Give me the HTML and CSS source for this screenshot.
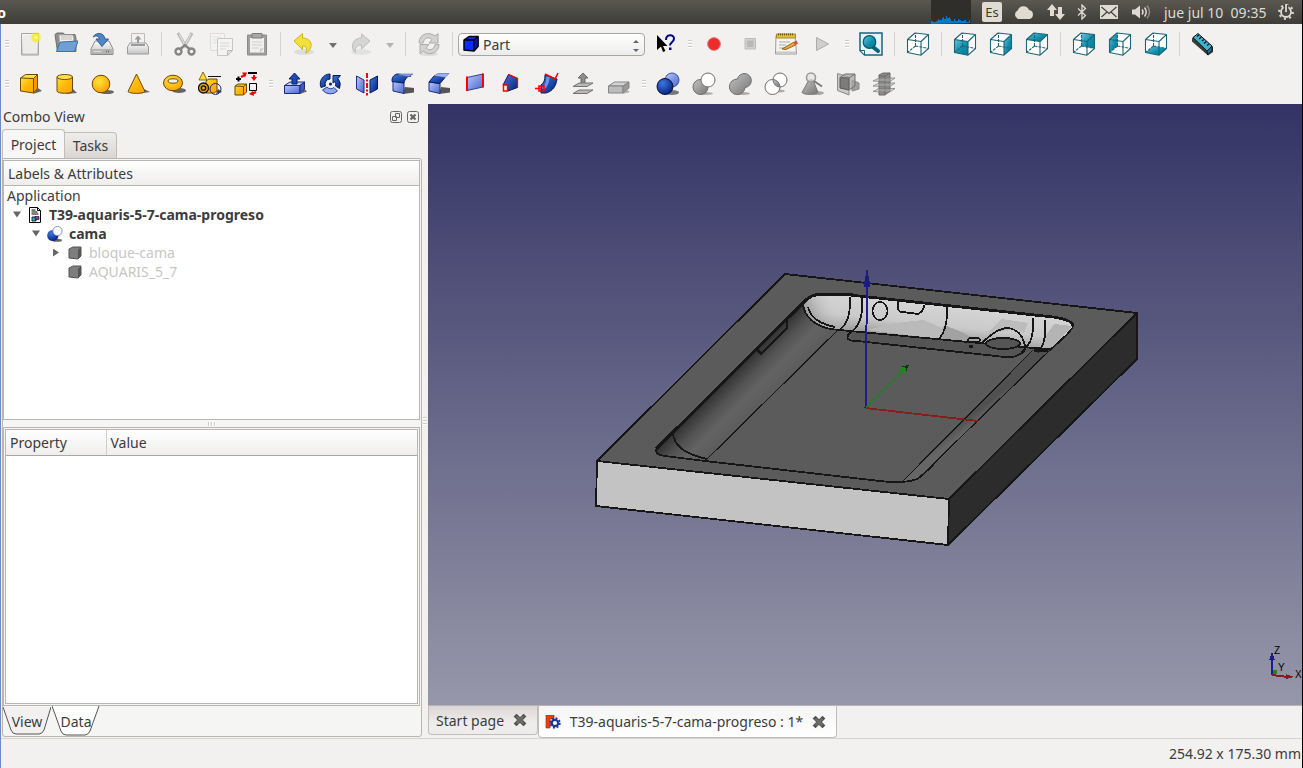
FILE: index.html
```html
<!DOCTYPE html>
<html lang="en">
<head>
    <meta charset="utf-8">
    <title>FreeCAD</title>
    <link rel="stylesheet" href="styles.css">
</head>
<body>
    <!-- Icon library -->
    <svg class="library" aria-hidden="true">
        <defs>
            <linearGradient id="gold" x1="0" y1="0" x2="1" y2="1"><stop offset="0" stop-color="#ffe23a"/><stop offset="0.5" stop-color="#ffb80a"/><stop offset="1" stop-color="#ffa200"/></linearGradient>
            <linearGradient id="blue" x1="0" y1="0" x2="1" y2="1"><stop offset="0" stop-color="#3f7be0"/><stop offset="1" stop-color="#04207a"/></linearGradient>
            <linearGradient id="pale" x1="0" y1="0" x2="1" y2="1"><stop offset="0" stop-color="#b9c9fa"/><stop offset="1" stop-color="#4a66cf"/></linearGradient>
            <linearGradient id="grey" x1="0" y1="0" x2="1" y2="1"><stop offset="0" stop-color="#c4c4c4"/><stop offset="1" stop-color="#747474"/></linearGradient>
            <linearGradient id="light" x1="0" y1="0" x2="0" y2="1"><stop offset="0" stop-color="#fafafa"/><stop offset="1" stop-color="#c4c4c4"/></linearGradient>
            <linearGradient id="teal" x1="0" y1="0" x2="1" y2="1"><stop offset="0" stop-color="#6cc0e0"/><stop offset="0.6" stop-color="#0a8ca8"/><stop offset="1" stop-color="#077d98"/></linearGradient>
            <radialGradient id="sun" cx="0.4" cy="0.35" r="0.7"><stop offset="0" stop-color="#ffe53a"/><stop offset="1" stop-color="#ff9c00"/></radialGradient>
            <radialGradient id="glow"><stop offset="0" stop-color="#fffba0"/><stop offset="0.5" stop-color="#f5ea2a"/><stop offset="1" stop-color="#f5ea2a" stop-opacity="0"/></radialGradient>
            <radialGradient id="ball" cx="0.35" cy="0.3" r="0.8"><stop offset="0" stop-color="#3b78e0"/><stop offset="1" stop-color="#021a78"/></radialGradient>
        </defs>

        <symbol id="i-new" viewBox="0 0 24 24"><path d="M3.500 1.500h17v21.500h-17z" fill="url(#light)" stroke="#a5a5a0"/><path d="M5 3h14v18.500H5z" fill="#ececea"/><circle cx="18" cy="5.500" r="6" fill="url(#glow)"/></symbol>
        <symbol id="i-open" viewBox="0 0 24 24"><path d="M1 2.500l2-1.500h6l2 1.500h10l1 4v13H3.500z" fill="#8f8f8c" stroke="#6f6f6c"/><path d="M5 3h14l1 8H6z" fill="#f2f2f2" stroke="#b0b0b0"/><path d="M7 5h11M7 7h11" stroke="#bbb"/><path d="M7 10l17-1-3.500 10.500H2.500L5.500 11z" fill="#6f9fd4" stroke="#3f6ea8"/></symbol>
        <symbol id="i-save" viewBox="0 0 24 24"><path d="M5 9h14l4 8v5.500H1V17z" fill="url(#light)" stroke="#8a8a88"/><path d="M1.500 17h21v5h-21z" fill="#b4b5b2"/><path d="M3.500 19.500h8" stroke="#ddd"/><path d="M16 19.500h4" stroke="#777" stroke-width="2" stroke-dasharray="1 1"/><path d="M3 5C6 0 14 0 15 7h3.500L12 14.500 6 7h3.500C9 4 6 3 3 5z" fill="#4f86c6" stroke="#2e5f9e"/></symbol>
        <symbol id="i-print" viewBox="0 0 24 24"><path d="M5.500 1.500h13V13h-13z" fill="#f2f2f2" stroke="#bcbcbc"/><path d="M12 3.500l3.500 4H13V12h-2V7.500H8.500z" fill="#999"/><path d="M4 11h16l2.500 4v7h-21v-7z" fill="url(#light)" stroke="#9a9a9a"/><path d="M5 13h14" stroke="#9a9a9a" stroke-width="2"/></symbol>
        <symbol id="i-cut" viewBox="0 0 24 24"><path d="M5 1l8 14M19 1l-8 14" stroke="#b3b3b3" stroke-width="3"/><path d="M6 2l7 13M18 2l-7 13" stroke="#e2e2e2" stroke-width="1.200"/><circle cx="5.500" cy="19.500" r="3" fill="none" stroke="#858585" stroke-width="2.400"/><circle cx="18.500" cy="19.500" r="3" fill="none" stroke="#858585" stroke-width="2.400"/><path d="M7.500 17l4.500-4 4.500 4" fill="none" stroke="#858585" stroke-width="2.400"/></symbol>
        <symbol id="i-copy" viewBox="0 0 24 24"><g opacity=".75"><path d="M1.500 1.500h14v17h-14z" fill="#f4f4f3" stroke="#d6d6d4"/><path d="M4 5h8M4 8h8M4 11h8" stroke="#dcdcda"/><path d="M8.500 6.500h15v12l-5 5h-10z" fill="#f4f4f3" stroke="#b8b8b6"/><path d="M11 11h9M11 14h9M11 17h6" stroke="#cfcfcd"/><path d="M18.500 23.500v-5h5z" fill="#ddd" stroke="#a8a8a6"/></g></symbol>
        <symbol id="i-paste" viewBox="0 0 24 24"><path d="M2.500 3h19v20h-19z" fill="#9f9f9f" stroke="#8a8a8a"/><path d="M5 6h14v14.500H5z" fill="#f0f0ef"/><path d="M7 10h10M7 13h10M7 16h7" stroke="#cfcfcd"/><path d="M7 1.500h10V6H7z" fill="#a8a8a8" stroke="#7c7c7c"/><path d="M15 20.500v-4h4z" fill="#c8c8c8"/></symbol>
        <symbol id="i-undo" viewBox="0 0 24 24"><ellipse cx="12" cy="20" rx="10" ry="3" fill="#ddd"/><path d="M2 9L10.500 1.500V6c6 0 9.500 4 8.500 8.500-.5 3-3 6-5.500 6.500 2-4 1.500-7-3-7v3.500z" fill="#f4e03c" stroke="#d0b41c"/></symbol>
        <symbol id="i-redo" viewBox="0 0 24 24"><ellipse cx="12" cy="20" rx="10" ry="3" fill="#e2e2e2"/><path d="M21 9L12.500 2v4c-6 0-9 4-9 8 0 3 1 5 3 6.500-1-4 1-7.500 6-7.500v4z" fill="#d5d5d4" stroke="#bdbdbc"/></symbol>
        <symbol id="i-refresh" viewBox="0 0 24 24"><ellipse cx="12" cy="22" rx="9" ry="2" fill="#ddd"/><path d="M2 11C2 1 13-.5 18 4l3-2.500V11h-9l3-3.500c-3-3-8-2-9 3.500z" fill="#d2d2d1" stroke="#acacab"/><path d="M22 12.500C22 22 11 24 6 19l-3 3v-9.500h9L9 16c3 3 8 2 9-3.500z" fill="#d2d2d1" stroke="#acacab"/></symbol>
        <symbol id="i-help" viewBox="0 0 24 24"><path d="M4 3v15l4-3.500 2 5.500 2.500-1-2.500-5h4.500z" fill="#000"/><path d="M13 8c0-6 8-6 8-1.500 0 4-4 3.500-4 7" fill="none" stroke="#000080" stroke-width="2"/><path d="M16 15.500h2.500V18H16z" fill="#000080"/></symbol>
        <symbol id="i-record" viewBox="0 0 24 24"><circle cx="12" cy="12" r="6.300" fill="#ee2a2a" stroke="#e06a6a"/></symbol>
        <symbol id="i-stop" viewBox="0 0 24 24"><path d="M7 6.500h10.500V17H7z" fill="#d0d0d0" stroke="#bdbdbd"/><path d="M9 8.500h6.500V15H9z" fill="#b8b8b8"/></symbol>
        <symbol id="i-edit" viewBox="0 0 24 24"><path d="M2 3.500h19L22.500 22h-21z" fill="#f4f4f2" stroke="#9c9c98"/><path d="M2.500 2h19v4h-19z" fill="#e2c23c" stroke="#a3882a"/><path d="M4 2.500h16" stroke="#6e5a14" stroke-width="2" stroke-dasharray="1 1"/><path d="M5 10h11M5 13h7M5 16h5" stroke="#a9a9a6"/><path d="M2 19.500h20v3H2z" fill="#c9c9c7"/><path d="M8 17l12-7 1.500 3-9.500 4.500z" fill="#f0a830" stroke="#7c4f10" stroke-width=".8"/><path d="M20 10l2.500-1.500 1.500 3-2.500 1.500z" fill="#e04a3a"/></symbol>
        <symbol id="i-play" viewBox="0 0 24 24"><path d="M6.500 5.500v13L18.500 12z" fill="#cfcfcf" stroke="#aaa"/></symbol>
        <symbol id="i-fit" viewBox="0 0 24 24"><path d="M1 1h22v22H5.500L1 18.500z" fill="#e6f3f6" stroke="#15667c" stroke-width="1.500"/><path d="M1 18.500h4.500V23z" fill="#fff" stroke="#15667c"/><path d="M14 15l5 4" stroke="#0d6178" stroke-width="4" stroke-linecap="round"/><circle cx="10.500" cy="10" r="6.300" fill="url(#teal)" stroke="#0d5468" stroke-width="1.200"/></symbol>

        <symbol id="cube-wire" viewBox="0 0 24 24"><g fill="none" stroke="#1d6475" stroke-width="1.100" stroke-linejoin="round"><path d="M9.500 14V1M9.500 14l-8 6.500M9.500 14l13 2.500" stroke-dasharray="3 1"/><path d="M9 1l13.500 1.500v14L15 23.200 1.500 20.500v-13zM1.500 7.500L15 9.500l7.500-7M15 9.500v13.700"/></g></symbol>
        <symbol id="i-iso" viewBox="0 0 24 24"><path d="M9 1l13.500 1.500v14L15 23.200 1.500 20.500v-13z" fill="#fff"/><use href="#cube-wire"/></symbol>
        <symbol id="i-front" viewBox="0 0 24 24"><path d="M9 1l13.500 1.500v14L15 23.200 1.500 20.500v-13z" fill="#fff"/><path d="M1.500 7.500L15 9.500v13.700L1.500 20.500z" fill="url(#teal)"/><use href="#cube-wire"/></symbol>
        <symbol id="i-right" viewBox="0 0 24 24"><path d="M9 1l13.500 1.500v14L15 23.200 1.500 20.500v-13z" fill="#fff"/><path d="M15 9.500l7.500-7v14L15 23.200z" fill="url(#teal)"/><use href="#cube-wire"/></symbol>
        <symbol id="i-top" viewBox="0 0 24 24"><path d="M9 1l13.500 1.500v14L15 23.200 1.500 20.500v-13z" fill="#fff"/><path d="M9 1l13.500 1.500-7.500 7-13.500-2z" fill="url(#teal)"/><use href="#cube-wire"/></symbol>
        <symbol id="i-rear" viewBox="0 0 24 24"><path d="M9 1l13.500 1.500v14L15 23.200 1.500 20.500v-13z" fill="#fff"/><path d="M9.500 1l13 1.500v14L9.500 14z" fill="url(#teal)"/><use href="#cube-wire"/></symbol>
        <symbol id="i-left" viewBox="0 0 24 24"><path d="M9 1l13.500 1.500v14L15 23.200 1.500 20.500v-13z" fill="#fff"/><path d="M1.500 7.500L9.500 1v13l-8 6.500z" fill="url(#teal)"/><use href="#cube-wire"/></symbol>
        <symbol id="i-bottom" viewBox="0 0 24 24"><path d="M9 1l13.500 1.500v14L15 23.200 1.500 20.500v-13z" fill="#fff"/><path d="M9.500 14l13 2.500-7.500 6.700-13.500-2.700z" fill="url(#teal)"/><use href="#cube-wire"/></symbol>
        <symbol id="i-measure" viewBox="0 0 24 24"><path d="M1 6l6-4 15 13v5l-5 3.500L1 9.500z" fill="#3b3b3b"/><path d="M2 5.500l5-4L21 14l-5 5z" fill="#3db4cf" stroke="#111"/><path d="M16 19l5-5v4.500L16.500 23z" fill="#1b6f85" stroke="#111"/><path d="M8 3l-2 1.500M10.500 5L8 7M13 7.500l-2 1.500M15.500 9.500L13 11.500M18 12l-2 1.500" stroke="#111" stroke-width="1.200"/></symbol>

        <symbol id="i-box" viewBox="0 0 24 24"><path d="M15 22l9-3-4-3z" fill="#444" opacity=".8"/><path d="M2.500 6l5-3.500h12l-4 4z" fill="#ffe14a"/><path d="M2.500 6l13 .5V21l-13-2z" fill="url(#gold)"/><path d="M15.500 6.500l4-4v14l-4 4.500z" fill="#f39a00"/><path d="M2.500 6l5-3.500h12v14l-4 4.500-13-2zM2.500 6l13 .5 4-4M15.500 6.500V21" fill="none" stroke="#6b4a06"/></symbol>
        <symbol id="i-cylinder" viewBox="0 0 24 24"><path d="M12 22l11-1-4-4z" fill="#444" opacity=".8"/><path d="M3 5v14c0 3 15.500 3 15.500 0V5z" fill="url(#gold)" stroke="#6b4a06"/><ellipse cx="10.750" cy="5" rx="7.750" ry="2.500" fill="#ffe14a" stroke="#6b4a06"/></symbol>
        <symbol id="i-sphere" viewBox="0 0 24 24"><ellipse cx="17" cy="20" rx="7" ry="2" fill="#444" opacity=".8"/><circle cx="11" cy="12" r="8.800" fill="url(#sun)" stroke="#6b4a06"/></symbol>
        <symbol id="i-cone" viewBox="0 0 24 24"><path d="M14 21.500l10-1.500-6-3z" fill="#444" opacity=".8"/><path d="M10.500 2L2 19.500c2 2.500 15 2.500 17 0z" fill="url(#gold)" stroke="#6b4a06"/></symbol>
        <symbol id="i-torus" viewBox="0 0 24 24"><ellipse cx="17" cy="18.500" rx="7" ry="2.500" fill="#444" opacity=".8"/><ellipse cx="11" cy="11" rx="9.500" ry="7.800" fill="url(#sun)" stroke="#6b4a06"/><ellipse cx="11" cy="9" rx="5" ry="2.200" fill="#f2f1f0" stroke="#6b4a06"/></symbol>
        <symbol id="i-primitives" viewBox="0 0 24 24"><path d="M18 22l6-2-4-3z" fill="#444"/><path d="M8 9l3-2h8v12l-3 2H8z" fill="url(#gold)" stroke="#6b4a06"/><path d="M5 0L1 8h8z" fill="#ffdc28" stroke="#6b4a06" stroke-width=".8"/><path d="M10 4.500h13" stroke="#111"/><circle cx="5.500" cy="16" r="5" fill="#e8a21a" stroke="#111" stroke-width="1.300"/><circle cx="5.500" cy="16" r="2.200" fill="none" stroke="#111" stroke-width="1.300"/><circle cx="17.500" cy="17" r="5.500" fill="none" stroke="#23277c"/></symbol>
        <symbol id="i-builder" viewBox="0 0 24 24"><path d="M1 14l3-2h8.500v8l-3 3H1z" fill="url(#gold)" stroke="#6b4a06"/><path d="M1 14l8.500 .500 3-2.500M9.500 14.500V23" fill="none" stroke="#6b4a06"/><path d="M4.500 4.500v5M2 7h5" stroke="#000" stroke-width="2"/><path d="M7 5l4-2" stroke="#e00" stroke-width="2"/><path d="M8 .5h5l-2 5z" fill="#e00"/><path d="M14 1h9" stroke="#000" stroke-width="2"/><path d="M20 3v4" stroke="#e00" stroke-width="2"/><path d="M17 5h6l-3 4z" fill="#e00"/><path d="M15.500 11.500h7v7h-7z" fill="none" stroke="#000"/><path d="M22 20l-4 2" stroke="#e00" stroke-width="2"/><path d="M19 19l-4 3 5 2z" fill="#e00"/></symbol>

        <symbol id="i-extrude" viewBox="0 0 24 24"><path d="M17 22l7-2.500-3-3z" fill="#444" opacity=".8"/><path d="M1.500 13.500L7 10h14.500L17 13.500z" fill="#c4d0fb" stroke="#1b2a78"/><path d="M1.500 13.500H17v8H1.500z" fill="url(#pale)" stroke="#1b2a78"/><path d="M17 13.500l4.500-3.500v7L17 21.500z" fill="#4158b8" stroke="#1b2a78"/><path d="M11.500 1l5.500 6h-3v5H9V7H6z" fill="#1c4bb4" stroke="#081f66"/></symbol>
        <symbol id="i-revolve" viewBox="0 0 24 24"><path d="M11 2A9.800 9.800 0 0 0 2 15.500l4.500-1.500A5 5 0 0 1 11 7z" fill="url(#blue)" stroke="#061c5c"/><path d="M3.500 18a10 10 0 0 0 15 1l-3.500-3.500a5 5 0 0 1-7-.5z" fill="#8ea6ee" stroke="#2c3f93"/><path d="M20.500 16.500a10 10 0 0 0-1.500-10l2.500-3H14V11l2-1.500a5 5 0 0 1 .5 4.500z" fill="url(#blue)" stroke="#061c5c"/><circle cx="11.500" cy="12" r="1.500" fill="#0a1d55"/></symbol>
        <symbol id="i-mirror" viewBox="0 0 24 24"><path d="M1.500 4l7.500 4v13l-7.500-4z" fill="url(#pale)" stroke="#1c2d7c"/><path d="M22.500 4L15 8v13l7.500-4z" fill="url(#blue)" stroke="#061c5c"/><path d="M12 1v22.500" stroke="#f00" stroke-width="2" stroke-dasharray="5 1.500 2 1.500"/></symbol>
        <symbol id="i-fillet" viewBox="0 0 24 24"><path d="M12 22l11-1.500v-4.500l-9-1z" fill="#555"/><path d="M2 9l11 2v10.500L2 19z" fill="url(#pale)" stroke="#1c2d7c"/><path d="M1 8.500c0-4 3-6.500 6-6.500l13 2c-4 0-6 3-7 7L1 9.500z" fill="url(#blue)" stroke="#061c5c"/><path d="M9 2h13l-4 2.500L7 3z" fill="#8fa6ee" stroke="#4a60b4" stroke-width=".6"/></symbol>
        <symbol id="i-chamfer" viewBox="0 0 24 24"><path d="M12 22l11-1.500v-4.500l-9-1z" fill="#555"/><path d="M2 10l11 1.500v10L2 19z" fill="url(#pale)" stroke="#1c2d7c"/><path d="M2 10l5-6 11 1.500-5 6z" fill="url(#blue)" stroke="#061c5c"/><path d="M7 4l4-2.500h11L18 5.500z" fill="#9db0f1" stroke="#4a60b4" stroke-width=".6"/></symbol>
        <symbol id="i-face" viewBox="0 0 24 24"><path d="M4 5.500l16-3.500v13L4 18.500z" fill="url(#pale)" stroke="#2c3f93"/><path d="M4 4.500v14.500M20 1.500v14" stroke="#f00" stroke-width="2"/></symbol>
        <symbol id="i-loft" viewBox="0 0 24 24"><path d="M4 13L9.500 2.500l9 4v9L9 19z" fill="url(#blue)" stroke="#061c5c"/><path d="M9.500 2.500l9 4v9.500" fill="none" stroke="#f00" stroke-width="1.300"/><path d="M4.500 13h4v6h-4z" fill="#fff" stroke="#f00" stroke-width="1.500"/></symbol>
        <symbol id="i-sweep" viewBox="0 0 24 24"><path d="M10 3c0 5-1 8-4 10v8h5c7-2 10-7 11-14z" fill="url(#blue)" stroke="#061c5c"/><path d="M13 5c0 6-2 9-5 12" fill="none" stroke="#6f92ee" stroke-width="3"/><path d="M10 2l10 5 3-6M4 14h5v5H4zM0 16.500h6" fill="none" stroke="#f00" stroke-width="1.600"/></symbol>
        <symbol id="i-offset" viewBox="0 0 24 24"><path d="M12 1l5 5h-3v6h-4V6H7z" fill="#8c8c8c" stroke="#6a6a6a"/><path d="M2 14.500L8 11h14l-6 3.500z" fill="#bababa" stroke="#747474"/><path d="M2 21.500L8 18h14l-6 3.500z" fill="#bababa" stroke="#747474"/></symbol>
        <symbol id="i-thickness" viewBox="0 0 24 24"><path d="M15 22l8-2-3-2z" fill="#aaa"/><path d="M1.500 14l6-4H22l-6 4z" fill="#d4d4d4" stroke="#858585"/><path d="M1.500 14H16v7H1.500z" fill="#bcbcbc" stroke="#858585"/><path d="M16 14l6-4v6l-6 5z" fill="#999" stroke="#858585"/></symbol>

        <symbol id="i-bool" viewBox="0 0 24 24"><ellipse cx="16" cy="20.500" rx="7" ry="2.500" fill="#444" opacity=".7"/><circle cx="16" cy="8" r="7" fill="url(#pale)" stroke="#3a4fa5"/><circle cx="9" cy="14.500" r="8" fill="url(#ball)" stroke="#04103f"/></symbol>
        <symbol id="i-difference" viewBox="0 0 24 24"><ellipse cx="14" cy="21.500" rx="7" ry="1.500" fill="#aaa"/><circle cx="8.500" cy="15" r="7.500" fill="url(#grey)" stroke="#6c6c6c"/><circle cx="16" cy="8" r="7" fill="#fff" stroke="#707070"/></symbol>
        <symbol id="i-union" viewBox="0 0 24 24"><ellipse cx="15" cy="21.500" rx="7" ry="1.500" fill="#aaa"/><path d="M9.500 7a7 7 0 1 1 7.500 8.500A7.800 7.800 0 1 1 9.500 7z" fill="url(#grey)" stroke="#6c6c6c"/></symbol>
        <symbol id="i-common" viewBox="0 0 24 24"><ellipse cx="15" cy="19" rx="6" ry="1.500" fill="#aaa"/><circle cx="8.500" cy="15" r="7.500" fill="#fff"/><circle cx="16" cy="8" r="7" fill="#fff"/><path d="M9.100 7.500A7.500 7.500 0 0 1 15.800 14.900 7 7 0 0 1 9.100 7.500z" fill="url(#grey)"/><circle cx="8.500" cy="15" r="7.500" fill="none" stroke="#707070"/><circle cx="16" cy="8" r="7" fill="none" stroke="#707070"/></symbol>
        <symbol id="i-check" viewBox="0 0 24 24"><ellipse cx="17" cy="21" rx="7" ry="2" fill="#aaa"/><path d="M9 8L2 20.500c2 2.500 13 2.500 16 0L13 8z" fill="url(#grey)" stroke="#777"/><circle cx="11" cy="5.500" r="4.500" fill="#e2e2e2" fill-opacity=".6" stroke="#9a9a9a" stroke-width="1.600"/><path d="M14 9l8 5.500" stroke="#777" stroke-width="1.800"/></symbol>
        <symbol id="i-section" viewBox="0 0 24 24"><path d="M16 8l7 3v6l-7 2z" fill="#a0a0a0" stroke="#888"/><path d="M1.500 1.500L13 5v18L1.500 18.500z" fill="#c9c9c9" stroke="#8a8a8a"/><path d="M4 5.500l9 .5v12l-9-2z" fill="#7c7c7c" stroke="#555"/><path d="M4 5.500L9 2h10v12l-6 4V6z" fill="#a5a5a5" fill-opacity=".7" stroke="#6e6e6e"/><path d="M13 6l6-4" stroke="#6e6e6e"/></symbol>
        <symbol id="i-slices" viewBox="0 0 24 24"><path d="M7 3l4-2h7v18l-5 4H7z" fill="#8d8d8d" stroke="#6a6a6a"/><path d="M13 4h-6M13 4l5-3M13 4v19" stroke="#666"/><path d="M1 9l6-3h16l-6 4zM1 14l6-3h16l-6 4zM1 19.500l6-3h16l-6 4z" fill="#b5b5b5" fill-opacity=".4" stroke="#777" stroke-width=".7"/></symbol>

        <symbol id="i-part" viewBox="0 0 18 18"><path d="M2 5l5-3.500h9v10l-4 4.500-10-1z" fill="#0a2cff" stroke="#000" stroke-width="1.500" stroke-linejoin="round"/><path d="M2 5h10v11M12 5l4-3.500" fill="none" stroke="#000" stroke-width="1.300"/><path d="M12 5l4-3.500v10l-4 4.500z" fill="#0314a8" stroke="#000"/></symbol>
        <symbol id="i-doc" viewBox="0 0 12 16"><path d="M.5.500h8l3 3v12H.5z" fill="#fff" stroke="#000"/><path d="M8.500.500v3h3M2.500 3h4M2.500 5h6M2.500 7h7" fill="none" stroke="#000"/><path d="M3 10h4v4H3z" fill="#38b6d0" stroke="#000" stroke-width=".8"/><path d="M6 9.500h4v3H6z" fill="#8a3aa8" stroke="#000" stroke-width=".6"/></symbol>
        <symbol id="i-cut-tree" viewBox="0 0 16 16"><ellipse cx="10" cy="14.300" rx="5" ry="1.500" fill="#666"/><circle cx="5.800" cy="9.500" r="5.600" fill="url(#ball)"/><circle cx="10.500" cy="5" r="4.600" fill="#fff" stroke="#8991b8"/></symbol>
        <symbol id="i-solid" viewBox="0 0 14 14"><path d="M1 3l4-2h8v9l-3 3-9-1z" fill="#7d7d7d" stroke="#555"/><path d="M10 4l3-3v9l-3 3z" fill="#555"/></symbol>
        <symbol id="i-close" viewBox="0 0 14 14"><path d="M3.500 3.500l7 7M10.500 3.500l-7 7" stroke="#4f4f4c" stroke-width="4" stroke-linecap="square"/><path d="M3.500 3.500l7 7M10.500 3.500l-7 7" stroke="#6c6c69" stroke-width="2.500"/></symbol>
        <symbol id="i-freecad" viewBox="0 0 16 14"><path d="M1 0h8v4H5v2h3v3H5v4H1z" fill="#f23a12" stroke="#b01e06" stroke-width=".6"/><circle cx="10" cy="8" r="3.200" fill="#fff" stroke="#1a3a98" stroke-width="2.200"/><circle cx="10" cy="8" r="4.800" fill="none" stroke="#1a3a98" stroke-width="1.800" stroke-dasharray="1.900 1.870"/></symbol>
    </svg>

    <header class="panel">
        <span class="panel-title">o</span>
        <svg class="load" viewBox="0 0 40 24"><path d="M0 24v-3h2v1h3v-1h2v-2h1v1h3v-2h1v-1h1v2h2v-3h1v2h2v-1h1v2h1v2h3v-2h1v2h3v-2h1v1h2v1h3v-1h2v2h3v-2h1v3z" fill="#0a78c8"/></svg>
        <span class="keyboard">Es</span>
        <svg class="cloud" viewBox="0 0 20 16"><path d="M4.500 15a4.500 4.500 0 0 1-.8-8.500A6 6 0 0 1 15 6a4.600 4.600 0 0 1 .5 9z" fill="#dfdbd2"/></svg>
        <svg class="network" viewBox="0 0 18 16"><path d="M5 0l5 6H7v6H3V6H0zM13 16l-5-6h3V3h4v7h3z" fill="#dfdbd2"/></svg>
        <svg class="bluetooth" viewBox="0 0 10 16"><path d="M1 4.500l7.500 7L5 15V1l3.500 3.500-7.500 7" fill="none" stroke="#dfdbd2" stroke-width="1.300"/></svg>
        <svg class="mail" viewBox="0 0 18 14"><path d="M0 0h18v14H0z" fill="#dfdbd2"/><path d="M1.500 2L9 8.500 16.500 2M1.500 12L7 7M16.500 12L11 7" fill="none" stroke="#45433e" stroke-width="1.200"/></svg>
        <svg class="sound" viewBox="0 0 20 16"><path d="M1 5.500h3L9 1.500v13l-5-4H1z" fill="#dfdbd2"/><g fill="none" stroke="#dfdbd2" stroke-width="1.500"><path d="M11 5.500q2 2.500 0 5"/><path d="M13.500 3.500q3.500 4.500 0 9"/><path d="M16 1.500q5 6.500 0 13" opacity=".45"/></g></svg>
        <time class="clock">jue jul 10&nbsp; 09:35</time>
        <svg class="session" viewBox="0 0 16 16"><circle cx="8" cy="8" r="5" fill="none" stroke="#dfdbd2" stroke-width="1.800"/><circle cx="8" cy="8" r="6.800" fill="none" stroke="#dfdbd2" stroke-width="2.200" stroke-dasharray="2 3.340"/><path d="M8 1v6" stroke="#45433e" stroke-width="4.500"/><path d="M8 0v8" stroke="#dfdbd2" stroke-width="1.800"/></svg>
    </header>

    <div class="window">
        <div class="toolbar">
            <span class="handle"></span>
            <button class="tool" aria-label="New"><svg><use href="#i-new"/></svg></button>
            <button class="tool" aria-label="Open"><svg><use href="#i-open"/></svg></button>
            <button class="tool" aria-label="Save"><svg><use href="#i-save"/></svg></button>
            <button class="tool" aria-label="Print"><svg><use href="#i-print"/></svg></button>
            <span class="separator"></span>
            <button class="tool" aria-label="Cut"><svg><use href="#i-cut"/></svg></button>
            <button class="tool" aria-label="Copy"><svg><use href="#i-copy"/></svg></button>
            <button class="tool" aria-label="Paste"><svg><use href="#i-paste"/></svg></button>
            <span class="separator"></span>
            <button class="tool" aria-label="Undo"><svg><use href="#i-undo"/></svg></button>
            <button class="more" aria-label="Undo history"></button>
            <button class="tool" aria-label="Redo"><svg><use href="#i-redo"/></svg></button>
            <button class="more off" aria-label="Redo history"></button>
            <span class="separator"></span>
            <button class="tool" aria-label="Refresh"><svg><use href="#i-refresh"/></svg></button>
            <span class="separator"></span>
            <div class="workbench">
                <svg><use href="#i-part"/></svg>
                <select aria-label="Workbench"><option>Part</option></select>
            </div>
            <button class="tool" aria-label="What's this?"><svg><use href="#i-help"/></svg></button>
            <span class="handle"></span>
            <button class="tool" aria-label="Record macro"><svg><use href="#i-record"/></svg></button>
            <button class="tool" aria-label="Stop macro"><svg><use href="#i-stop"/></svg></button>
            <button class="tool" aria-label="Macros"><svg><use href="#i-edit"/></svg></button>
            <button class="tool" aria-label="Run macro"><svg><use href="#i-play"/></svg></button>
            <span class="handle"></span>
            <button class="tool" aria-label="Fit all"><svg><use href="#i-fit"/></svg></button>
            <span class="separator"></span>
            <button class="tool" aria-label="Axonometric"><svg><use href="#i-iso"/></svg></button>
            <span class="separator"></span>
            <button class="tool" aria-label="Front"><svg><use href="#i-front"/></svg></button>
            <button class="tool" aria-label="Right"><svg><use href="#i-right"/></svg></button>
            <button class="tool" aria-label="Top"><svg><use href="#i-top"/></svg></button>
            <span class="separator"></span>
            <button class="tool" aria-label="Rear"><svg><use href="#i-rear"/></svg></button>
            <button class="tool" aria-label="Left"><svg><use href="#i-left"/></svg></button>
            <button class="tool" aria-label="Bottom"><svg><use href="#i-bottom"/></svg></button>
            <span class="separator"></span>
            <button class="tool" aria-label="Measure distance"><svg><use href="#i-measure"/></svg></button>
        </div>

        <div class="toolbar">
            <span class="handle"></span>
            <button class="tool" aria-label="Box"><svg><use href="#i-box"/></svg></button>
            <button class="tool" aria-label="Cylinder"><svg><use href="#i-cylinder"/></svg></button>
            <button class="tool" aria-label="Sphere"><svg><use href="#i-sphere"/></svg></button>
            <button class="tool" aria-label="Cone"><svg><use href="#i-cone"/></svg></button>
            <button class="tool" aria-label="Torus"><svg><use href="#i-torus"/></svg></button>
            <button class="tool" aria-label="Primitives"><svg><use href="#i-primitives"/></svg></button>
            <button class="tool" aria-label="Shape builder"><svg><use href="#i-builder"/></svg></button>
            <span class="handle"></span>
            <button class="tool" aria-label="Extrude"><svg><use href="#i-extrude"/></svg></button>
            <button class="tool" aria-label="Revolve"><svg><use href="#i-revolve"/></svg></button>
            <button class="tool" aria-label="Mirror"><svg><use href="#i-mirror"/></svg></button>
            <button class="tool" aria-label="Fillet"><svg><use href="#i-fillet"/></svg></button>
            <button class="tool" aria-label="Chamfer"><svg><use href="#i-chamfer"/></svg></button>
            <button class="tool" aria-label="Ruled surface"><svg><use href="#i-face"/></svg></button>
            <button class="tool" aria-label="Loft"><svg><use href="#i-loft"/></svg></button>
            <button class="tool" aria-label="Sweep"><svg><use href="#i-sweep"/></svg></button>
            <button class="tool" aria-label="Offset"><svg><use href="#i-offset"/></svg></button>
            <button class="tool" aria-label="Thickness"><svg><use href="#i-thickness"/></svg></button>
            <span class="handle"></span>
            <button class="tool" aria-label="Boolean"><svg><use href="#i-bool"/></svg></button>
            <button class="tool" aria-label="Difference"><svg><use href="#i-difference"/></svg></button>
            <button class="tool" aria-label="Union"><svg><use href="#i-union"/></svg></button>
            <button class="tool" aria-label="Intersection"><svg><use href="#i-common"/></svg></button>
            <button class="tool" aria-label="Check geometry"><svg><use href="#i-check"/></svg></button>
            <button class="tool" aria-label="Section"><svg><use href="#i-section"/></svg></button>
            <button class="tool" aria-label="Cross-sections"><svg><use href="#i-slices"/></svg></button>
        </div>

        <main class="workspace">
            <aside class="dock">
                <div class="dock-title">
                    <span>Combo View</span>
                    <button aria-label="Float"><svg viewBox="0 0 12 12"><rect x=".5" y=".5" width="11" height="11" rx="2"/><path d="M5.500 2.500h4v4h-4zM2.500 5.500h4v4h-4z"/></svg></button>
                    <button aria-label="Close"><svg viewBox="0 0 12 12"><rect x=".5" y=".5" width="11" height="11" rx="2"/><path d="M3.500 3.500l5 5M8.500 3.500l-5 5" stroke-width="2.200"/></svg></button>
                </div>
                <div class="dock-tabs">
                    <button class="dock-tab active">Project</button>
                    <button class="dock-tab">Tasks</button>
                </div>
                <div class="dock-body">
                    <section class="tree">
                        <h2>Labels &amp; Attributes</h2>
                        <ul>
                            <li class="root">Application</li>
                            <li class="document"><i class="arrow down"></i><svg class="doc"><use href="#i-doc"/></svg><b>T39-aquaris-5-7-cama-progreso</b></li>
                            <li class="feature"><i class="arrow down"></i><svg><use href="#i-cut-tree"/></svg><b>cama</b></li>
                            <li class="child"><i class="arrow"></i><svg><use href="#i-solid"/></svg>bloque-cama</li>
                            <li class="child"><i class="arrow none"></i><svg><use href="#i-solid"/></svg>AQUARIS_5_7</li>
                        </ul>
                    </section>
                    <div class="splitter"></div>
                    <section class="properties">
                        <div class="sheet">
                            <table>
                                <thead><tr><th class="name">Property</th><th>Value</th></tr></thead>
                            </table>
                        </div>
                    </section>
                    <div class="sheet-tabs">
                        <button class="view-tab"><svg viewBox="0 0 48 30"><path d="M0 1l8 23q1.500 4 5 4h23q3 0 5-4l7-23"/></svg><span>View</span></button>
                        <button class="data-tab"><svg viewBox="0 0 48 30"><path d="M0 0l9 25q1.500 4 5 4h19q3 0 5-4l9-25"/></svg><span>Data</span></button>
                    </div>
                </div>
            </aside>

            <div class="side-splitter"></div>

            <section class="documents">
                <div class="scene">
                    <svg viewBox="428 104 874 601" preserveAspectRatio="xMidYMid slice">
                        <defs>
                            <linearGradient id="wall" gradientUnits="userSpaceOnUse" x1="730" y1="375" x2="760" y2="405"><stop offset="0" stop-color="#303030"/><stop offset=".35" stop-color="#525252"/><stop offset=".65" stop-color="#636363"/><stop offset="1" stop-color="#5c5c5c"/></linearGradient>
                            <linearGradient id="back" gradientUnits="userSpaceOnUse" x1="940" y1="303" x2="936" y2="340"><stop offset="0" stop-color="#d6d6d6"/><stop offset=".6" stop-color="#cacaca"/><stop offset="1" stop-color="#9c9c9c"/></linearGradient>
                            <linearGradient id="corner" gradientUnits="userSpaceOnUse" x1="806" y1="322" x2="840" y2="308"><stop offset="0" stop-color="#8c8c8c"/><stop offset="1" stop-color="#dadada" stop-opacity="0"/></linearGradient>
                            <linearGradient id="ledge" gradientUnits="userSpaceOnUse" x1="967" y1="418" x2="973" y2="426"><stop offset="0" stop-color="#505050"/><stop offset="1" stop-color="#666"/></linearGradient>
                        </defs>
                        <!-- Block -->
                        <g stroke="#161616" stroke-width="1.800" stroke-linejoin="round">
                            <path d="M597 461l352 38-1 46-352-39z" fill="#c3c3c3"/>
                            <path d="M949 499l188-186v46L948 545z" fill="#2c2c2c"/>
                            <path d="M785 274l352 39-188 186-352-38z" fill="#5b5b5b"/>
                        </g>
                        <!-- Pocket walls -->
                        <path d="M803 303L657 449q0 7 10 8l38 4 132-131q-32-5-34-27z" fill="url(#wall)"/>
                        <path d="M1030 353L903 481l14-2 20-17 113-112z" fill="url(#ledge)"/>
                        <path d="M803 304q7-10 20-10l30 1 200 22q20 3 20 8 0 4-23 25L837 330q-34-5-34-26z" fill="url(#back)"/>
                        <path d="M803 304q7-10 20-10l27 1q1 26-11 35-34-5-36-26z" fill="url(#corner)"/>
                        <path d="M1054 324l18 2-22 24-12-3z" fill="#b4b4b4"/>
                        <path d="M867 330l28-7 29-3 22 10-6 9z" fill="#bababa"/>
                        <path d="M985 335l17-16 26 4-4 10-8-4z" fill="#bcbcbc"/>
                        <path d="M944 325l20 8 16 10-39-4z" fill="#a2a2a2"/>
                        <!-- Floor recess -->
                        <path d="M855 331l178 18-14 7-24 0-139-15q-9-3-1-10z" fill="#555"/>
                        <g fill="none" stroke="#161616" stroke-width="1.800">
                            <path d="M656 449q-1 6 9 7l40 5 175 20q24 3 37-2 6-4 16-14"/>
                            <path d="M673 433q1 19 34 26"/>
                            <path d="M803 305q3 18 27 24l20 2 183 17 17 1M808 307q3 15 27 20"/>
                            <path d="M1073 326q0 4-23 24"/>
                            <path d="M850 297q1 26-11 33M862 298q2 25-11 34-5 4-3 7 2 2 9 2l139 15q18 3 24-2 3-1 5-5M947 307q1 22-8 32M1033 318q1 20-5 27l-6 7M1045 320q2 24-7 32"/>
                            <ellipse cx="880" cy="311" rx="7.500" ry="9"/>
                            <path d="M898 302v7q1 3 5 3l15 2q6-3 6-9"/>
                            <path d="M982 343q15-15 26-15 14 2 17 18"/>
                            <ellipse cx="1003" cy="343.500" rx="17" ry="5.500" fill="#555"/>
                            <ellipse cx="974" cy="340" rx="6" ry="2.300"/>
                            <path d="M787 320v8l-26 26-4-5" stroke-width="2.500"/>
                            <path d="M1034 350h14" stroke-width="3"/>
                        </g>
                        <path d="M969 345h4v3h-4z" fill="#161616"/>
                        <g fill="none" stroke="#161616" stroke-width="1.200">
                            <path d="M838 330L705 461"/>
                            <path d="M1033 350L903 481"/>
                            <path d="M1050 350L920 477"/>
                        </g>
                        <path d="M656 449l147-146q7-9 20-9l30 1" fill="none" stroke="#161616" stroke-width="3"/>
                        <path d="M822 294l28 1 203 22q20 3 20 9" fill="none" stroke="#161616" stroke-width="2.800"/>
                        <!-- Axes -->
                        <path d="M865 408l113 13" stroke="#861c1c" stroke-width="1.800"/>
                        <path d="M865 408l38-37" stroke="#1f801f" stroke-width="1.500"/>
                        <path d="M902 366l7-1-3 7z" fill="#123512"/>
                        <circle cx="903" cy="370" r="3" fill="#1f851f"/>
                        <path d="M865.500 408l1.500-123" stroke="#1d1d8c" stroke-width="2"/>
                        <path d="M867 267l3.500 20h-7z" fill="#1d1d80"/>
                        <!-- Corner axis cross -->
                        <path d="M1272 675v-18" stroke="#1d1d8c" stroke-width="2"/>
                        <path d="M1272 652l3 8h-6z" fill="#1d1d80"/>
                        <path d="M1272 675l16 2" stroke="#861c1c" stroke-width="2"/>
                        <path d="M1286 674l8 3-8 2z" fill="#861c1c"/>
                        <circle cx="1275" cy="672" r="2.300" fill="#1f851f"/>
                        <text x="1274" y="654">Z</text>
                        <text x="1278" y="671">Y</text>
                        <text x="1295" y="678">X</text>
                    </svg>
                </div>
                <nav class="doc-tabs">
                    <button class="doc-tab">Start page <svg class="close"><use href="#i-close"/></svg></button>
                    <button class="doc-tab active"><svg class="logo"><use href="#i-freecad"/></svg>T39-aquaris-5-7-cama-progreso : 1* <svg class="close"><use href="#i-close"/></svg></button>
                </nav>
            </section>
        </main>

        <footer class="status">254.92 x 175.30 mm</footer>
    </div>
</body>
</html>
```
FILE: styles.css
```css
*,
*::before,
*::after {
    box-sizing: border-box;
}

body {
    margin: 0;
    height: 100vh;
    display: flex;
    flex-direction: column;
    overflow: hidden;
    background: #f2f1f0;
    border-right: 1px solid #000;
    color: #3c3c3c;
    font-family: "Noto Sans", "Open Sans", sans-serif;
    font-size: 14px;
}

button {
    margin: 0;
    padding: 0;
    border: none;
    background: none;
    color: inherit;
    font: inherit;
}

svg {
    display: block;
    flex: none;
}

.library {
    position: absolute;
    width: 0;
    height: 0;
}

/* System panel */
.panel {
    display: flex;
    flex: none;
    align-items: center;
    height: 24px;
    padding-right: 8px;
    background: linear-gradient(#5a5850, #3d3c38);
    color: #dfdbd2;
}

.panel-title {
    display: flex;
    justify-content: flex-end;
    width: 6px;
    margin-right: auto;
    overflow: hidden;
    color: #fff;
    font-weight: bold;
}

.load {
    width: 40px;
    height: 24px;
    margin-right: 11px;
    background: #2f2e2b;
}

.keyboard {
    width: 20px;
    height: 20px;
    margin-right: 12px;
    border-radius: 2px;
    background: #dfdbd2;
    color: #3c3b37;
    line-height: 20px;
    text-align: center;
    font-size: 13px;
}

.cloud {
    width: 20px;
    height: 16px;
    margin-right: 13px;
}

.network {
    width: 18px;
    height: 16px;
    margin-right: 12px;
}

.bluetooth {
    width: 10px;
    height: 16px;
    margin-right: 13px;
}

.mail {
    width: 18px;
    height: 14px;
    margin-right: 13px;
}

.sound {
    width: 20px;
    height: 16px;
    margin-right: 13px;
}

.clock {
    width: 102px;
    margin-right: 12px;
    white-space: nowrap;
}

.session {
    width: 16px;
    height: 16px;
}

/* Main window */
.window {
    display: flex;
    flex: 1;
    flex-direction: column;
    min-height: 0;
    border-left: 1px solid #6c8cc4;
}

.toolbar {
    display: flex;
    flex: none;
    align-items: center;
    height: 40px;
}

.handle {
    flex: none;
    width: 13px;
    height: 8px;
    background: repeating-linear-gradient(#cfcdca 0 1px, #fff 1px 2px, transparent 2px 3px) center / 4px 8px no-repeat;
}

.handle:first-child {
    width: 11px;
}

.separator {
    flex: none;
    width: 11px;
    height: 24px;
    background: linear-gradient(#d6d3d0, #d6d3d0) center / 1px 24px no-repeat;
}

.tool {
    display: flex;
    flex: none;
    align-items: center;
    justify-content: center;
    width: 36px;
    height: 36px;
}

.tool svg {
    width: 24px;
    height: 24px;
}

.more {
    flex: none;
    width: 21px;
    height: 36px;
}

.more::before {
    content: "";
    display: block;
    width: 8px;
    margin: 3px auto 0;
    border: 4px solid transparent;
    border-top: 5px solid #6f6f6c;
    border-bottom: none;
}

.more.off::before {
    border-top-color: #b4b4b2;
}

.workbench {
    position: relative;
    flex: none;
    width: 187px;
    margin-right: 2px;
}

.workbench select {
    display: block;
    width: 100%;
    height: 23px;
    padding: 0 24px;
    border: 1px solid #a9a6a2;
    border-radius: 4px;
    appearance: none;
    background: linear-gradient(#fff, #ececeb);
    color: #3c3c3c;
    font: inherit;
}

.workbench svg {
    position: absolute;
    top: 2px;
    left: 4px;
    width: 18px;
    height: 18px;
}

.workbench::before,
.workbench::after {
    content: "";
    position: absolute;
    right: 6px;
    border: 3px solid transparent;
}

.workbench::before {
    top: 7px;
    border-bottom-color: #666;
    border-top: none;
}

.workbench::after {
    bottom: 4px;
    border-top-color: #666;
    border-bottom: none;
}

.workspace {
    display: flex;
    flex: 1;
    min-height: 0;
}

/* Combo view */
.dock {
    display: flex;
    flex: none;
    flex-direction: column;
    width: 421px;
    padding: 0 0 1px 1px;
}

.dock-title {
    display: flex;
    flex: none;
    align-items: center;
    gap: 5px;
    height: 25px;
    padding: 0 3px 0 1px;
}

.dock-title span {
    flex: 1;
}

.dock-title svg {
    width: 12px;
    height: 12px;
    fill: none;
    stroke: #666;
}

.dock-tabs {
    display: flex;
    flex: none;
    align-items: flex-end;
    height: 29px;
}

.dock-tab {
    width: 52px;
    height: 26px;
    border: 1px solid #c1beba;
    border-left: none;
    border-bottom: none;
    border-radius: 0 4px 0 0;
    background: linear-gradient(#efedeb, #d9d6d3);
}

.dock-tab.active {
    width: 63px;
    height: 29px;
    border-left: 1px solid #c1beba;
    border-radius: 4px 4px 0 0;
    background: #f7f7f7;
}

.dock-body {
    display: flex;
    flex: 1;
    flex-direction: column;
    min-height: 0;
    padding: 1px 1px 0 0;
    border: 1px solid #b9b6b2;
    border-radius: 0 3px 3px 3px;
    background: #f5f5f4;
}

.tree {
    flex: 261;
    border: 1px solid #b9b6b2;
    background: #fff;
}

.tree h2 {
    height: 25px;
    margin: 0;
    padding-left: 4px;
    border-bottom: 1px solid #b9b6b2;
    background: linear-gradient(#fff, #efeeed);
    font-size: 14px;
    font-weight: normal;
    line-height: 26px;
}

.tree ul {
    margin: 0;
    padding: 0;
    list-style: none;
}

.tree li {
    display: flex;
    align-items: center;
    height: 19px;
    padding-left: 3px;
}

.tree svg {
    width: 14px;
    height: 14px;
    margin-right: 7px;
}

.tree .doc {
    width: 12px;
    height: 16px;
    margin-left: 1px;
    margin-right: 8px;
}

.tree .document {
    padding-left: 6px;
}

.tree .feature {
    padding-left: 25px;
}

.tree .feature svg {
    width: 16px;
    height: 16px;
    margin-right: 6px;
}

.tree .child {
    padding-left: 46px;
    color: #c8c6c4;
}

.arrow {
    width: 18px;
    height: 8px;
    background: #666;
    clip-path: polygon(3px 0, 9px 4px, 3px 8px);
}

.arrow.down {
    clip-path: polygon(3px 1px, 11px 1px, 7px 7px);
}

.arrow.none {
    background: none;
}

.splitter {
    flex: none;
    height: 7px;
    background: repeating-linear-gradient(90deg, #cfcdca 0 1px, #fff 1px 2px, transparent 2px 3px) center / 8px 4px no-repeat;
}

.properties {
    display: flex;
    flex: 278;
    padding: 1px;
    border: 1px solid #b9b6b2;
}

.sheet {
    flex: 1;
    border: 1px solid #b9b6b2;
    background: #fff;
}

.sheet table {
    width: 100%;
    border-collapse: collapse;
}

.sheet th {
    height: 25px;
    padding: 0 4px;
    border-bottom: 1px solid #a9a6a2;
    background: linear-gradient(#fff, #efeeed);
    font-weight: normal;
    text-align: left;
}

.sheet .name {
    width: 100px;
    border-right: 1px solid #d0cecb;
}

.sheet-tabs {
    display: flex;
    flex: none;
    gap: 1px;
    height: 30px;
    align-items: flex-start;
}

.sheet-tabs button {
    position: relative;
    width: 48px;
    height: 30px;
}

.sheet-tabs svg {
    position: absolute;
    top: 0;
    left: 0;
    width: 48px;
    height: 30px;
    fill: #f2f1f0;
    stroke: #555;
}

.sheet-tabs .data-tab svg {
    fill: #fff;
}

.sheet-tabs span {
    position: relative;
}

.side-splitter {
    flex: none;
    width: 6px;
    background: repeating-linear-gradient(#cfcdca 0 1px, #fff 1px 2px, transparent 2px 3px) center / 4px 8px no-repeat;
}

/* Document area */
.documents {
    display: flex;
    flex: 1;
    flex-direction: column;
    min-width: 0;
}

.scene {
    flex: 1;
    min-height: 0;
    background: linear-gradient(#333365, #9797aa);
}

.scene svg {
    width: 100%;
    height: 100%;
    shape-rendering: crispEdges;
}

.scene text {
    font-family: "Liberation Sans", sans-serif;
    font-size: 10px;
}

.doc-tabs {
    display: flex;
    flex: none;
    align-items: flex-start;
    height: 33px;
    border-top: 1px solid #b9b3b8;
}

.doc-tab {
    display: flex;
    align-items: center;
    justify-content: space-between;
    width: 110px;
    height: 29px;
    padding: 0 10px 0 7px;
    border: 1px solid #c1beba;
    border-top: none;
    border-radius: 0 0 4px 4px;
    background: linear-gradient(#dad6d3, #efedec 60%);
    white-space: nowrap;
}

.doc-tab.active {
    width: 299px;
    height: 32px;
    padding: 0 10px 0 6px;
    background: linear-gradient(#f5f5f4, #fff);
}

.close {
    width: 14px;
    height: 14px;
}

.logo {
    width: 16px;
    height: 14px;
}

.status {
    flex: none;
    height: 30px;
    padding-right: 1px;
    border-top: 1px solid #d6d3d0;
    line-height: 30px;
    text-align: right;
}
```
